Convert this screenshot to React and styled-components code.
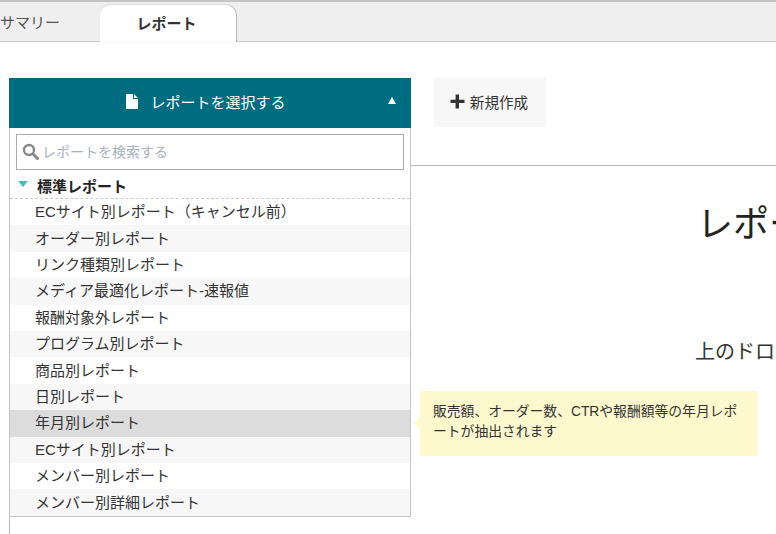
import React from "react";
import styled, { createGlobalStyle } from "styled-components";

const Global = createGlobalStyle`
  html, body { margin: 0; padding: 0; background: #fff; height: 100%; overflow: hidden; }
  body { font-family: "Liberation Sans", "Noto Sans CJK JP", sans-serif; color: #333; }
  * { box-sizing: border-box; }
`;
const Page = styled.div`width: 776px; height: 534px; overflow: hidden; display: flex; flex-direction: column;`;
const TabBar = styled.div`
  height: 42px; flex: none; display: flex; align-items: flex-end; background: #eeefee;
  border-top: 2px solid #c4c4c4; border-bottom: 1px solid #c8c8c8; overflow: visible;
`;
const Tab = styled.div`
  height: ${p => (p.$active ? "37px" : "36px")};
  width: ${p => (p.$active ? "136px" : "100px")};
  display: flex; align-items: center; justify-content: center; font-size: 15px; padding-bottom: 3px;
  margin-bottom: ${p => (p.$active ? "-1px" : "0")};
  ${p => p.$active ? `
    background: #fff; font-weight: 700; border-radius: 10px 10px 0 0; padding-right: 3px;
    box-shadow: 1px 0 1px #b4b4b4, 0 -1px 1px #e0e0e0; color: #333;
  ` : `color: #555; justify-content: flex-start;`}
`;
const Body = styled.div`flex: 1; display: flex; flex-direction: column; padding: 36px 0 0 9px; min-height: 0;`;
const Toolbar = styled.div`display: flex; gap: 23px; height: 50px; flex: none;`;
const SelectWrap = styled.div`position: relative; width: 402px; z-index: 2;`;
const SelectHead = styled.div`
  height: 50px; background: #006c80; color: #fff; font-size: 15px; display: flex; align-items: center;
  justify-content: center; position: relative; gap: 12px; padding: 0 8px 3px 0;
`;
const Caret = styled.span`
  position: absolute; right: 15px; top: 19px; width: 0; height: 0;
  border-left: 4px solid transparent; border-right: 4px solid transparent; border-bottom: 7px solid #fff;
`;
const Menu = styled.div`
  position: absolute; top: 50px; left: 0; width: 402px; height: 389px; background: #fff;
  border: 1px solid #c4c4c4; border-top: 0; display: flex; flex-direction: column;
`;
const Search = styled.div`
  margin: 6px 6px 0 6px; height: 36px; border: 1px solid #aaa; display: flex; align-items: center;
  padding: 0 0 2px 5px; gap: 3px; color: #a7b2bb; font-size: 14px; flex: none;
`;
const GroupTitle = styled.div`
  height: 29px; flex: none; display: flex; align-items: center; gap: 9px; padding: 3px 0 0 8px;
  font-size: 15px; font-weight: 700; color: #222; border-bottom: 1px dashed #ccc;
`;
const GroupCaret = styled.span`
  width: 0; height: 0; border-left: 5px solid transparent; border-right: 5px solid transparent;
  border-top: 6px solid #45bcc0; margin-top: -3px;
`;
const Row = styled.div`
  height: 26.42px; flex: none; display: flex; align-items: center; padding: 0 0 3px 25px; font-size: 15px; color: #333;
  background: ${p => (p.$hover ? "#dcdcdc" : p.$odd ? "#f7f7f7" : "#fff")};
`;
const Tip = styled.div`
  position: absolute; left: 411px; top: 313px; width: 338px; height: 65px; background: #fdf8cd; color: #333;
  font-size: 13.8px; line-height: 20px; padding: 11px 13px;
  &::before {
    content: ""; position: absolute; left: -6px; top: 26px; width: 0; height: 0;
    border-top: 6px solid transparent; border-bottom: 6px solid transparent; border-right: 6px solid #fdf8cd;
  }
`;
const NewButton = styled.div`
  width: 112px; height: 49px; background: #f7f7f7; display: flex; align-items: center; justify-content: center;
  gap: 5px; font-size: 14.6px; color: #333; padding: 0 2px 3px 0;
`;
const Content = styled.div`
  margin-top: 37px; flex: 1; border-top: 1px solid #b8b8b8; border-left: 1px solid #b8b8b8;
  padding: 39px 0 0 687px; white-space: nowrap;
`;
const Heading = styled.h1`margin: 0; font-size: 36px; font-weight: 400; line-height: 40px; color: #222;`;
const Lead = styled.p`margin: 92px 0 0 -2px; font-size: 20px; line-height: 30px; color: #333;`;

const rows = ["ECサイト別レポート（キャンセル前）","オーダー別レポート","リンク種類別レポート","メディア最適化レポート-速報値","報酬対象外レポート","プログラム別レポート","商品別レポート","日別レポート","年月別レポート","ECサイト別レポート","メンバー別レポート","メンバー別詳細レポート"];

const FileIcon = () => (
  <svg width="12" height="15" viewBox="0 0 12 15"><path fill="#fff" d="M0 0h7v5h5v10H0zM8 0l4 4H8z"/></svg>
);
const SearchIcon = () => (
  <svg width="17" height="17" viewBox="0 0 17 17" fill="none" stroke="#8a8a8a"><circle cx="7" cy="7" r="5" strokeWidth="2.4"/><path d="M10.8 10.8l4.6 4.6" strokeWidth="3" strokeLinecap="round"/></svg>
);
const PlusIcon = () => (
  <svg width="15" height="15" viewBox="0 0 15 15"><path fill="#333" d="M5.6 0.5h3.4v5.2h5.5v3.4H9v5.4H5.6V9.1H0.5V5.7h5.1z"/></svg>
);

export default function App() {
  return (
    <Page>
      <Global />
      <TabBar>
        <Tab>サマリー</Tab>
        <Tab $active>レポート</Tab>
      </TabBar>
      <Body>
        <Toolbar>
          <SelectWrap>
            <SelectHead><FileIcon />レポートを選択する<Caret /></SelectHead>
            <Menu>
              <Search><SearchIcon />レポートを検索する</Search>
              <GroupTitle><GroupCaret />標準レポート</GroupTitle>
              {rows.map((r, i) => <Row key={i} $odd={i % 2 === 1} $hover={i === 8}>{r}</Row>)}
            </Menu>
            <Tip>販売額、オーダー数、CTRや報酬額等の年月レポートが抽出されます</Tip>
          </SelectWrap>
          <NewButton><PlusIcon />新規作成</NewButton>
        </Toolbar>
        <Content>
          <Heading>レポートが選択されていません</Heading>
          <Lead>上のドロップダウンからレポートを選択してください</Lead>
        </Content>
      </Body>
    </Page>
  );
}
